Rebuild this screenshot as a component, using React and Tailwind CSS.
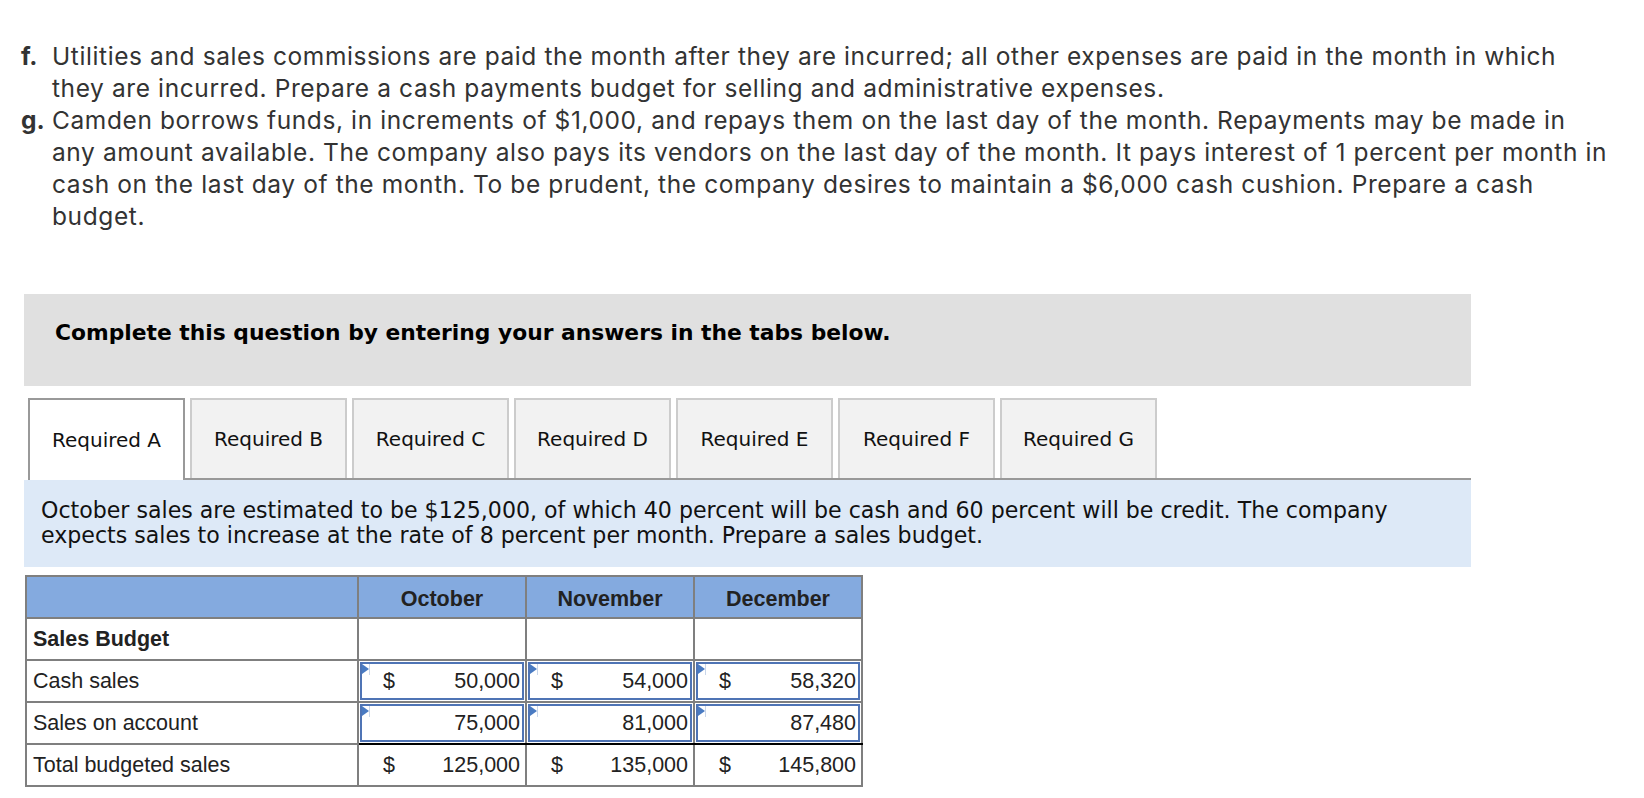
import React from 'react';

const tabs = ['Required B', 'Required C', 'Required D', 'Required E', 'Required F', 'Required G'];

const rows = [
    {label: 'Cash sales', input: true, dollar: true, values: ['50,000', '54,000', '58,320']},
    {label: 'Sales on account', input: true, dollar: false, values: ['75,000', '81,000', '87,480']},
];

const totals = ['125,000', '135,000', '145,800'];

// little blue flag in the corner of an answer cell
function Flag() {
    return (
        <>
            <span className="absolute left-0 top-0 w-0 h-0 border-y-[5px] border-y-transparent border-l-[7px] border-l-[#4a7bc2]"></span>
            <span className="absolute left-[7px] top-0 w-px h-[11px] bg-[#c9d6ea]"></span>
        </>
    );
}

function AnswerCell({dollar, value, last}) {
    return (
        <td className={`p-[1px] border-2 border-[#7f7f7f] ${last ? 'border-b-black' : ''}`}>
            <div className="relative h-[38px] border-2 border-[#4f74b5] flex items-center justify-between pl-[21px] pr-[2px]">
                <Flag/>
                <span>{dollar ? '$' : ''}</span>
                <span>{value}</span>
            </div>
        </td>
    );
}

function App() {
    return (
        <div className="w-[1644px] min-h-[798px] bg-white">
            {/* problem text */}
            <div className="pt-[40px] pl-[21px] text-[24.5px] leading-[32px] tracking-[0.6px] text-[#333]" style={{fontFamily: 'Inter, sans-serif'}}>
                <div className="flex">
                    <span className="w-[31px] shrink-0 font-bold tracking-normal">f.</span>
                    <p>
                        Utilities and sales commissions are paid the month after they are incurred; all other expenses are paid in the month in which<br/>
                        they are incurred. Prepare a cash payments budget for selling and administrative expenses.
                    </p>
                </div>
                <div className="flex">
                    <span className="w-[31px] shrink-0 font-bold tracking-normal">g.</span>
                    <p>
                        Camden borrows funds, in increments of $1,000, and repays them on the last day of the month. Repayments may be made in<br/>
                        any amount available. The company also pays its vendors on the last day of the month. It pays interest of 1 percent per month in<br/>
                        cash on the last day of the month. To be prudent, the company desires to maintain a $6,000 cash cushion. Prepare a cash<br/>
                        budget.
                    </p>
                </div>
            </div>

            <div className="ml-[24px] w-[1447px]" style={{fontFamily: '"DejaVu Sans", Verdana, sans-serif'}}>
                <div className="mt-[62px] h-[92px] bg-[#e0e0e0] pt-[26px] pl-[31px] text-[21.8px] leading-[26px] font-bold text-black">
                    Complete this question by entering your answers in the tabs below.
                </div>

                {/* tabs */}
                <div className="mt-[12px] flex items-end">
                    <div className="ml-[4px] w-[157px] h-[82px] bg-white border-2 border-b-0 border-[#999] flex items-center justify-center text-[20px] text-[#111]">
                        Required A
                    </div>
                    <div className="flex-1 flex gap-[5px] pl-[5px] border-b-2 border-[#999]">
                        {tabs.map((t) => (
                            <div key={t} className="w-[157px] h-[80px] bg-[#f2f2f2] border-2 border-b-0 border-[#ccc] flex items-center justify-center text-[20px] text-[#111]">
                                {t}
                            </div>
                        ))}
                    </div>
                </div>

                <div className="h-[87px] bg-[#dde9f7] pt-[18px] pl-[17px] text-[22.1px] leading-[25px] text-[#111]">
                    October sales are estimated to be $125,000, of which 40 percent will be cash and 60 percent will be credit. The company<br/>
                    expects sales to increase at the rate of 8 percent per month. Prepare a sales budget.
                </div>
            </div>

            {/* sales budget table */}
            <table className="mt-[8px] ml-[25px] w-[836px] table-fixed border-collapse text-[21.5px] text-[#222]" style={{fontFamily: '"Liberation Sans", Arial, sans-serif'}}>
                <colgroup>
                    <col className="w-[332px]"/>
                    <col className="w-[168px]"/>
                    <col className="w-[168px]"/>
                    <col className="w-[168px]"/>
                </colgroup>
                <thead>
                    <tr className="h-[42px] bg-[#84aadf]">
                        <th className="border-2 border-[#7f7f7f]"></th>
                        <th className="border-2 border-[#7f7f7f] font-bold pt-[4px]">October</th>
                        <th className="border-2 border-[#7f7f7f] font-bold pt-[4px]">November</th>
                        <th className="border-2 border-[#7f7f7f] font-bold pt-[4px]">December</th>
                    </tr>
                </thead>
                <tbody>
                    <tr className="h-[42px]">
                        <td className="border-2 border-[#7f7f7f] pl-[6px] font-bold">Sales Budget</td>
                        <td className="border-2 border-[#7f7f7f]"></td>
                        <td className="border-2 border-[#7f7f7f]"></td>
                        <td className="border-2 border-[#7f7f7f]"></td>
                    </tr>
                    {rows.map((row, i) => (
                        <tr key={row.label} className="h-[42px]">
                            <td className="border-2 border-[#7f7f7f] pl-[6px]">{row.label}</td>
                            {row.values.map((v) => (
                                <AnswerCell key={v} dollar={row.dollar} value={v} last={i === rows.length - 1}/>
                            ))}
                        </tr>
                    ))}
                    <tr className="h-[42px]">
                        <td className="border-2 border-[#7f7f7f] pl-[6px]">Total budgeted sales</td>
                        {totals.map((v) => (
                            <td key={v} className="border-2 border-[#7f7f7f] border-t-black p-0">
                                <div className="flex items-center justify-between pl-[24px] pr-[5px]">
                                    <span>$</span>
                                    <span>{v}</span>
                                </div>
                            </td>
                        ))}
                    </tr>
                </tbody>
            </table>
        </div>
    );
}

export default App;
